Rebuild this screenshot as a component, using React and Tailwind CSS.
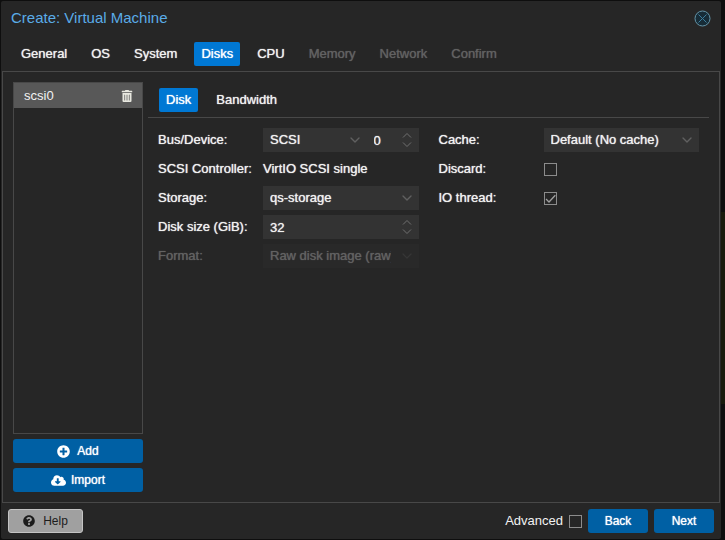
import React, { useState } from 'react';
import { ChevronDown } from 'lucide-react';
import { FaPlusCircle, FaCloudDownloadAlt, FaQuestionCircle, FaTrashAlt } from 'react-icons/fa';

const STEPS = [
  { name: 'General' },
  { name: 'OS' },
  { name: 'System' },
  { name: 'Disks' },
  { name: 'CPU' },
  { name: 'Memory', disabled: true },
  { name: 'Network', disabled: true },
  { name: 'Confirm', disabled: true },
];

const Tab = ({ name, active, disabled, onClick }) => (
  <button
    type="button"
    disabled={disabled}
    onClick={onClick}
    className={`h-6 px-[7px] rounded-xs text-shadow-[0_0_1px_currentColor] ${
      active ? 'bg-[#0078d4] text-white' : disabled ? 'text-[#626262]' : 'text-[#f2f2f2]'
    }`}
  >
    {name}
  </button>
);

const Field = ({ id, label, disabled, children }) => (
  <div className={`flex items-center h-6 ${disabled ? 'text-[#626262]' : 'text-[#f2f2f2]'}`}>
    <label htmlFor={id} className="w-[105px] shrink-0 whitespace-nowrap text-shadow-[0_0_1px_currentColor]">
      {label}:
    </label>
    <div className="flex flex-1 min-w-0">{children}</div>
  </div>
);

const Select = ({ id, value, disabled }) => (
  <div className={`relative flex-1 min-w-0 ${disabled ? 'bg-[#292929]' : 'bg-[#333333]'}`}>
    <select
      id={id}
      disabled={disabled}
      defaultValue={value}
      className="block w-full h-6 pl-[7px] pr-7 appearance-none outline-none opacity-100 text-shadow-[0_0_1px_currentColor]"
    >
      <option>{value}</option>
    </select>
    <ChevronDown
      strokeWidth={2}
      className={`absolute right-1 top-1 w-4 h-4 pointer-events-none ${disabled ? 'text-[#363636]' : 'text-[#606060]'}`}
    />
  </div>
);

const Spinner = ({ id, label, value, className }) => (
  <div className={`relative bg-[#333333] ${className}`}>
    <input
      id={id}
      type="number"
      aria-label={label}
      defaultValue={value}
      className="block w-full h-6 pl-[7px] pr-5 outline-none [appearance:textfield] [&::-webkit-inner-spin-button]:appearance-none text-shadow-[0_0_1px_currentColor]"
    />
    <svg
      viewBox="0 0 10 16"
      fill="none"
      stroke="currentColor"
      className="absolute right-[7px] top-1 w-[10px] h-4 pointer-events-none text-[#707070]"
    >
      <path d="M1 5.5 5 1.5 9 5.5M1 10.5 5 14.5 9 10.5" />
    </svg>
  </div>
);

const Checkbox = ({ id, checked }) => (
  <span className="relative block w-[13px] h-[13px]">
    <input
      id={id}
      type="checkbox"
      defaultChecked={checked}
      className="peer block w-[13px] h-[13px] appearance-none border border-[#8c8c8c]"
    />
    <svg
      viewBox="0 0 13 13"
      fill="none"
      stroke="#a0a0a0"
      strokeWidth="1.3"
      className="absolute inset-0 hidden pointer-events-none peer-checked:block"
    >
      <path d="M2 7 5 10 11.3 3.2" />
    </svg>
  </span>
);

const ActionButton = ({ icon: Icon, iconClass, children, className = '' }) => (
  <button
    type="button"
    className={`flex items-center justify-center h-6 rounded-[3px] bg-[#0060a4] text-xs text-white text-shadow-[0_0_1px_currentColor] ${className}`}
  >
    {Icon && <Icon className={iconClass} />}
    {children}
  </button>
);

const App = () => {
  const [step, setStep] = useState('Disks');
  const [diskTab, setDiskTab] = useState('Disk');

  return (
    <div className="flex min-h-screen bg-[#0e0e0e] pt-px pl-px pb-px font-['Liberation_Sans',Arial,sans-serif] text-[13px] leading-4">
      <div className="flex flex-1 flex-col min-w-0 rounded-xs bg-[#262626] px-px">
        <header className="flex items-center justify-between h-[34px] pl-[9px] pr-[9px]">
          <h1 className="text-[15px] text-[#5aace8]">Create: Virtual Machine</h1>
          <button type="button" aria-label="Close" className="text-[#3d7d9c]">
            <svg viewBox="0 0 17 17" fill="none" stroke="currentColor" className="w-[17px] h-[17px]">
              <circle cx="8.5" cy="8.5" r="7.5" fill="#172c37" stroke="#6394a8" />
              <path d="M4.5 4.5 12.5 12.5M12.5 4.5 4.5 12.5" />
            </svg>
          </button>
        </header>

        <nav className="flex gap-[10px] pt-[7px] pb-[5px] pl-3">
          {STEPS.map((s) => (
            <Tab key={s.name} {...s} active={s.name === step} onClick={() => setStep(s.name)} />
          ))}
        </nav>

        <main className="flex flex-1 gap-[5px] border border-[#484848] p-[10px]">
          <aside className="flex flex-col gap-[5px] w-[130px] shrink-0">
            <ul className="flex-1 border border-[#484848]">
              <li className="flex items-center justify-between h-[25px] pl-[10px] pr-[9px] bg-[#585858] text-[#f2f2f2]">
                scsi0
                <button type="button" aria-label="Remove scsi0">
                  <FaTrashAlt className="w-3 h-3 text-[#e8e8e0]" />
                </button>
              </li>
            </ul>
            <ActionButton icon={FaPlusCircle} iconClass="w-[13px] h-[13px]" className="gap-[7px]">
              Add
            </ActionButton>
            <ActionButton icon={FaCloudDownloadAlt} iconClass="w-[15px] h-[15px]" className="gap-[5px]">
              Import
            </ActionButton>
          </aside>

          <section className="flex-1 min-w-0">
            <div className="flex gap-[11px] pt-[6px] pb-[5px] pl-[11px] border-b border-[#484848]">
              {['Disk', 'Bandwidth'].map((name) => (
                <Tab key={name} name={name} active={name === diskTab} onClick={() => setDiskTab(name)} />
              ))}
            </div>

            <form className="grid grid-cols-2 gap-x-5 p-[10px]">
              <div className="flex flex-col gap-[5px] min-w-0">
                <Field id="bus" label="Bus/Device">
                  <Select id="bus" value="SCSI" />
                  <Spinner id="device" label="Device number" value="0" className="w-[52px]" />
                </Field>
                <Field label="SCSI Controller">
                  <span className="text-shadow-[0_0_1px_currentColor]">VirtIO SCSI single</span>
                </Field>
                <Field id="storage" label="Storage">
                  <Select id="storage" value="qs-storage" />
                </Field>
                <Field id="size" label="Disk size (GiB)">
                  <Spinner id="size" value="32" className="flex-1" />
                </Field>
                <Field id="format" label="Format" disabled>
                  <Select id="format" value="Raw disk image (raw)" disabled />
                </Field>
              </div>

              <div className="flex flex-col gap-[5px] min-w-0">
                <Field id="cache" label="Cache">
                  <Select id="cache" value="Default (No cache)" />
                </Field>
                <Field id="discard" label="Discard">
                  <Checkbox id="discard" />
                </Field>
                <Field id="iothread" label="IO thread">
                  <Checkbox id="iothread" checked />
                </Field>
              </div>
            </form>
          </section>
        </main>

        <footer className="flex items-center gap-[6px] h-9 px-[6px]">
          <button
            type="button"
            className="flex items-center justify-center gap-2 w-[75px] h-6 mr-auto rounded-[3px] border border-[#c4c4c4] bg-[#a0a0a0] text-xs text-[#1c1c1c]"
          >
            <FaQuestionCircle className="w-3 h-3" />
            Help
          </button>
          <label htmlFor="advanced" className="text-[#f2f2f2]">
            Advanced
          </label>
          <Checkbox id="advanced" />
          <ActionButton className="w-[60px]">Back</ActionButton>
          <ActionButton className="w-[60px]">Next</ActionButton>
        </footer>
      </div>

      {/* page behind the dialog */}
      <div className="flex flex-col w-1 shrink-0">
        <div className="flex-[211]" />
        <div className="flex-[191] bg-[#191a0c]" />
        <div className="flex-[135]" />
      </div>
    </div>
  );
};

export default App;
